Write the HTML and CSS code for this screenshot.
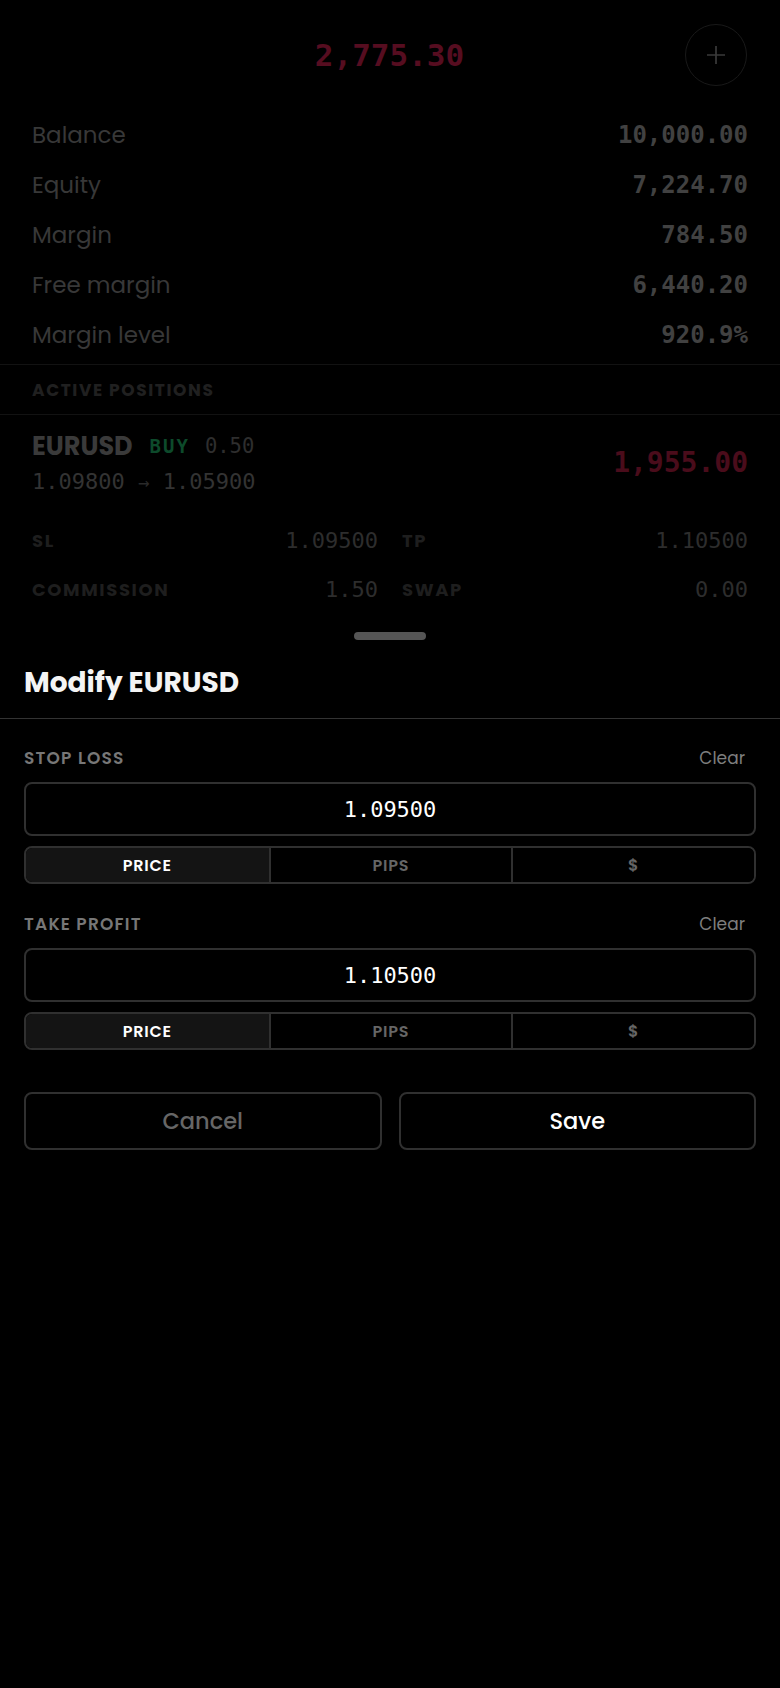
FILE: index.html
```html
<!DOCTYPE html>
<html lang="en">
<head>
  <meta charset="UTF-8">
  <title>Modify EURUSD</title>
  <link rel="stylesheet" href="styles.css">
</head>
<body>

<div class="screen">
  <div class="header">
    <span></span>
    <div class="total">2,775.30</div>
    <button class="add-btn" aria-label="New order">
      <svg width="20" height="20" viewBox="0 0 20 20"><path d="M10 1v18M1 10h18" stroke="currentColor" stroke-width="1.7"/></svg>
    </button>
  </div>

  <div class="stats">
    <div class="stat"><span class="stat-label">Balance</span><span class="stat-value">10,000.00</span></div>
    <div class="stat"><span class="stat-label">Equity</span><span class="stat-value">7,224.70</span></div>
    <div class="stat"><span class="stat-label">Margin</span><span class="stat-value">784.50</span></div>
    <div class="stat"><span class="stat-label">Free margin</span><span class="stat-value">6,440.20</span></div>
    <div class="stat"><span class="stat-label">Margin level</span><span class="stat-value">920.9%</span></div>
  </div>

  <div class="section-title">Active positions</div>

  <div class="position">
    <div class="position-top">
      <div>
        <div class="pos-line">
          <span class="symbol">EURUSD</span>
          <span class="side">BUY</span>
          <span class="lots">0.50</span>
        </div>
        <div class="prices">1.09800 <span class="arrow">→</span> 1.05900</div>
      </div>
      <div class="pnl">1,955.00</div>
    </div>
    <div class="details">
      <div class="detail"><span class="detail-label">SL</span><span class="detail-value">1.09500</span></div>
      <div class="detail"><span class="detail-label">TP</span><span class="detail-value">1.10500</span></div>
      <div class="detail"><span class="detail-label">Commission</span><span class="detail-value">1.50</span></div>
      <div class="detail"><span class="detail-label">Swap</span><span class="detail-value">0.00</span></div>
    </div>
  </div>

  <!-- bottom sheet over the dimmed account screen -->
  <div class="sheet">
    <div class="handle"></div>
    <h2 class="sheet-title">Modify EURUSD</h2>

    <div class="form">
      <div class="field">
        <div class="field-head">
          <span class="field-label">Stop loss</span>
          <span class="clear">Clear</span>
        </div>
        <input class="price-input" type="text" value="1.09500">
        <div class="segments">
          <button class="seg active">PRICE</button>
          <button class="seg">PIPS</button>
          <button class="seg">$</button>
        </div>
      </div>

      <div class="field">
        <div class="field-head">
          <span class="field-label">Take profit</span>
          <span class="clear">Clear</span>
        </div>
        <input class="price-input" type="text" value="1.10500">
        <div class="segments">
          <button class="seg active">PRICE</button>
          <button class="seg">PIPS</button>
          <button class="seg">$</button>
        </div>
      </div>

      <div class="actions">
        <button class="btn btn-cancel">Cancel</button>
        <button class="btn btn-save">Save</button>
      </div>
    </div>
  </div>
</div>

</body>
</html>
```

FILE: styles.css
```css
* {
  box-sizing: border-box;
}
body {
  margin: 0;
  background-color: #000;
  font-family: Poppins, Inter, "Noto Sans", sans-serif;
  color: #fff;
}
.screen {
  position: relative;
  min-height: 100vh;
  overflow: hidden;
}

/* dimmed account screen */
.header {
  display: grid;
  grid-template-columns: 1fr auto 1fr;
  align-items: center;
  padding: 24px 33px 24px 32px;
}
.total {
  font-family: "DejaVu Sans Mono", monospace;
  font-size: 31px;
  font-weight: bold;
  color: #560d20;
}
.add-btn {
  justify-self: end;
  width: 62px;
  height: 62px;
  border-radius: 50%;
  border: 1px solid #191919;
  background: transparent;
  color: #3a3a3a;
  display: flex;
  align-items: center;
  justify-content: center;
  padding: 0;
}
.stats {
  padding-bottom: 4px;
}
.stat {
  height: 50px;
  display: flex;
  justify-content: space-between;
  align-items: center;
  padding: 0 32px;
}
.stat-label {
  font-size: 23px;
  color: #383838;
}
.stat-value {
  font-family: "DejaVu Sans Mono", monospace;
  font-size: 24px;
  font-weight: bold;
  color: #414141;
}
.section-title {
  height: 51px;
  border-top: 1px solid #121212;
  border-bottom: 1px solid #121212;
  padding: 0 32px;
  display: flex;
  align-items: center;
  font-size: 17px;
  font-weight: 700;
  letter-spacing: 1.6px;
  text-transform: uppercase;
  color: #202020;
}
.position {
  padding: 15px 32px 0;
}
.position-top {
  display: flex;
  justify-content: space-between;
  align-items: center;
}
.pos-line {
  height: 32px;
  display: flex;
  align-items: center;
  gap: 17px;
}
.symbol {
  font-size: 25.5px;
  font-weight: 700;
  color: #3a3a3a;
}
.side {
  font-family: "DejaVu Sans Mono", monospace;
  font-size: 19px;
  font-weight: bold;
  letter-spacing: 2px;
  color: #0d4a2b;
}
.lots {
  font-family: "DejaVu Sans Mono", monospace;
  font-size: 20.5px;
  color: #2e2e2e;
  margin-left: -2px;
}
.prices {
  margin-top: 4px;
  height: 32px;
  line-height: 32px;
  font-family: "DejaVu Sans Mono", monospace;
  font-size: 22px;
  color: #333;
}
.prices .arrow {
  font-size: 19px;
  color: #2a2a2a;
}
.pnl {
  font-family: "DejaVu Sans Mono", monospace;
  font-size: 28px;
  font-weight: bold;
  color: #4a0c1b;
  margin-bottom: 4px;
}
.details {
  margin-top: 18px;
  display: grid;
  grid-template-columns: 1fr 1fr;
  column-gap: 24px;
}
.detail {
  height: 49px;
  display: flex;
  justify-content: space-between;
  align-items: center;
}
.detail-label {
  font-size: 18px;
  font-weight: 700;
  letter-spacing: 1.6px;
  text-transform: uppercase;
  color: #1e1e1e;
}
.detail-value {
  font-family: "DejaVu Sans Mono", monospace;
  font-size: 22px;
  color: #2d2d2d;
}

/* bottom sheet */
.sheet {
  position: absolute;
  top: 608px;
  left: 0;
  right: 0;
  bottom: 0;
  background-color: #000;
  border-radius: 20px 20px 0 0;
}
.handle {
  width: 72px;
  height: 8px;
  border-radius: 4px;
  background-color: #555;
  margin: 24px auto 0;
}
.sheet-title {
  margin: 25px 0 0;
  padding: 0 24px 17px;
  line-height: 36px;
  font-size: 28px;
  font-weight: 700;
  color: #f4f4f4;
  border-bottom: 1px solid #333;
}
.form {
  padding: 0 24px;
}
.field {
  margin-top: 27px;
}
.field + .field {
  margin-top: 28px;
}
.field-head {
  height: 24px;
  display: flex;
  justify-content: space-between;
  align-items: center;
  padding-right: 11px;
  margin-bottom: 12px;
}
.field-label {
  font-size: 17px;
  font-weight: 600;
  letter-spacing: 1.2px;
  text-transform: uppercase;
  color: #777;
}
.clear {
  font-size: 17px;
  color: #7e7e7e;
}
.price-input {
  display: block;
  width: 100%;
  height: 54px;
  border: 2px solid #303030;
  border-radius: 8px;
  background: #000;
  color: #fff;
  text-align: center;
  font-family: "DejaVu Sans Mono", monospace;
  font-size: 22px;
  outline: none;
}
.segments {
  margin-top: 10px;
  height: 38px;
  display: grid;
  grid-template-columns: 1fr 1fr 1fr;
  border: 2px solid #303030;
  border-radius: 8px;
  overflow: hidden;
}
.seg {
  border: none;
  border-left: 2px solid #303030;
  background: #000;
  color: #666;
  font-family: Poppins, Inter, "Noto Sans", sans-serif;
  font-size: 16px;
  font-weight: 600;
  letter-spacing: 0.8px;
  padding: 0;
}
.seg:first-child {
  border-left: none;
}
.seg.active {
  background-color: #141414;
  color: #fff;
}
.actions {
  margin-top: 42px;
  display: grid;
  grid-template-columns: 1fr 1fr;
  gap: 17px;
}
.btn {
  height: 58px;
  border: 2px solid #303030;
  border-radius: 8px;
  background: #000;
  font-family: Poppins, Inter, "Noto Sans", sans-serif;
  font-size: 22.5px;
  font-weight: 500;
  cursor: pointer;
}
.btn-cancel {
  color: #666;
}
.btn-save {
  color: #fff;
}
```
